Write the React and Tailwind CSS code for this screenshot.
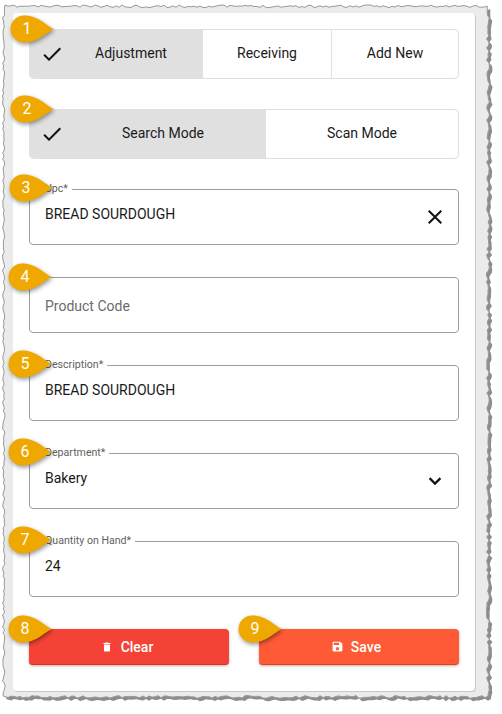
import React from 'react';

const font = { fontFamily: 'Roboto, sans-serif' };

// torn paper edge, seeded so every render gives the same outline
const tornEdge = () => {
  let seed = 11;
  const rnd = () => {
    seed = (seed * 16807) % 2147483647;
    return seed / 2147483647;
  };
  const pts = [];
  for (let x = 5; x < 488; x += 3) pts.push([x, 5 + rnd() * 2.6]);
  for (let y = 6; y < 696; y += 3) pts.push([486.5 + rnd() * 3, y]);
  for (let x = 488; x > 5; x -= 3) pts.push([x, 695.5 + rnd() * 2.8]);
  for (let y = 696; y > 6; y -= 3) pts.push([2.5 + rnd() * 2.5, y]);
  return pts.map((p) => p[0].toFixed(1) + ',' + p[1].toFixed(1)).join(' ');
};

const edge = tornEdge();

const markers = [
  { n: 1, x: 9, y: 29 },
  { n: 2, x: 9, y: 109 },
  { n: 3, x: 8, y: 188 },
  { n: 4, x: 7, y: 277 },
  { n: 5, x: 7, y: 364 },
  { n: 6, x: 7, y: 452 },
  { n: 7, x: 7, y: 540 },
  { n: 8, x: 7, y: 629 },
  { n: 9, x: 237, y: 629 },
];

const Marker = ({ n, x, y }) => (
  <div className="absolute w-[46px] h-[28px]" style={{ left: x, top: y - 14 }}>
    <svg width="46" height="28" viewBox="0 0 46 28" className="absolute inset-0 overflow-visible drop-shadow-[1px_2px_2px_rgba(0,0,0,0.4)]">
      <path d="M45 14 C38 16.5 30 27.5 15 27.5 A13.5 13.5 0 0 1 15 .5 C30 .5 38 11.5 45 14 Z" fill="#efa800" />
    </svg>
    <span className="absolute left-[11px] top-0 w-[14px] text-center text-white text-[16px] leading-[28px]">{n}</span>
  </div>
);

const CheckIcon = () => (
  <svg width="24" height="24" viewBox="0 0 24 24" fill="#111">
    <path d="M9 16.17 4.83 12l-1.42 1.41L9 19 21 7l-1.41-1.41z" />
  </svg>
);

const ToggleGroup = ({ options }) => (
  <div className="flex h-[50px] rounded border border-[#e0e0e0]">
    {options.map((o) => (
      <div
        key={o.label}
        style={{ width: o.w }}
        className={
          'relative flex items-center justify-center pb-[2px] text-sm text-[#1a1a1a] ' +
          (o.selected ? 'bg-[#e0e0e0] rounded-l pl-[30px] ' : '') +
          (o.divider ? 'border-l border-[#e0e0e0] ' : '')
        }
      >
        {o.selected && (
          <span className="absolute left-[10px] top-[12px]">
            <CheckIcon />
          </span>
        )}
        {o.label}
      </div>
    ))}
  </div>
);

const Field = ({ label, value, placeholder, icon }) => (
  <div className="relative h-[56px] rounded border border-[#9e9e9e] px-[15px]">
    {label ? (
      <span className="absolute left-[11px] top-[-7px] bg-white px-1 text-[10.6px] leading-3 text-[#5f5f5f]">{label}</span>
    ) : null}
    {placeholder ? (
      <div className="pt-[18px] text-sm leading-5 text-[#6b6b6b]">{placeholder}</div>
    ) : (
      <div className="pt-[14px] text-sm leading-5 text-[#1a1a1a]">{value}</div>
    )}
    {icon && <span className="absolute right-[11px] top-[15px]">{icon}</span>}
  </div>
);

export default function App() {
  return (
    <div className="relative w-[502px] h-[714px] overflow-hidden bg-white pl-[13px] pt-[13px]" style={font}>
      <svg width="502" height="714" className="absolute inset-0">
        <polygon points={edge} fill="#6f6f6f" transform="translate(3 3)" opacity="0.8" />
        <polygon points={edge} fill="#eaecec" stroke="#9a9a9a" strokeWidth="1" />
      </svg>

      <div className="relative flex h-[678px] w-[462px] flex-col rounded bg-white p-4 shadow-[1px_1px_0_#c8c8c8]">
        <ToggleGroup
          options={[
            { label: 'Adjustment', w: 172, selected: true },
            { label: 'Receiving', w: 129, divider: true },
            { label: 'Add New', w: 127, divider: true },
          ]}
        />
        <div className="mt-[30px]">
          <ToggleGroup
            options={[
              { label: 'Search Mode', w: 236, selected: true },
              { label: 'Scan Mode', w: 192 },
            ]}
          />
        </div>

        <div className="mt-[30px] flex flex-col gap-8">
          <Field
            label="Upc*"
            value="BREAD SOURDOUGH"
            icon={
              <svg width="24" height="24" viewBox="0 0 24 24" fill="#111">
                <path d="M19 6.41 17.59 5 12 10.59 6.41 5 5 6.41 10.59 12 5 17.59 6.41 19 12 13.41 17.59 19 19 17.59 13.41 12z" />
              </svg>
            }
          />
          <Field placeholder="Product Code" />
          <Field label="Description*" value="BREAD SOURDOUGH" />
          <Field
            label="Department*"
            value="Bakery"
            icon={
              <svg width="24" height="24" viewBox="0 0 24 24" fill="#111" stroke="#111" strokeWidth="0.4">
                <path d="M16.59 8.59 12 13.17 7.41 8.59 6 10l6 6 6-6z" />
              </svg>
            }
          />
          <Field label="Quantity on Hand*" value="24" />
        </div>

        <div className="mt-8 flex justify-between">
          <button className="flex h-9 w-[200px] items-center justify-center gap-2 rounded border-b border-[#e8291c] bg-[#f44336] pr-1 text-sm font-medium text-white shadow-[0_1px_3px_rgba(0,0,0,0.3)]">
            <svg width="12" height="12" viewBox="0 0 24 24" fill="white">
              <path d="M6 19c0 1.1.9 2 2 2h8c1.1 0 2-.9 2-2V7H6v12zM19 4h-3.5l-1-1h-5l-1 1H5v2h14V4z" />
            </svg>
            Clear
          </button>
          <button className="flex h-9 w-[200px] items-center justify-center gap-[7px] rounded border-b border-[#f03c0c] bg-[#ff5a36] pr-[6px] text-sm font-medium text-white shadow-[0_1px_3px_rgba(0,0,0,0.3)]">
            <svg width="13" height="13" viewBox="0 0 24 24" fill="white">
              <path d="M17 3H5c-1.11 0-2 .9-2 2v14c0 1.1.89 2 2 2h14c1.1 0 2-.9 2-2V7l-4-4zm-5 16c-1.66 0-3-1.34-3-3s1.34-3 3-3 3 1.34 3 3-1.34 3-3 3zm3-10H5V5h10v4z" />
            </svg>
            Save
          </button>
        </div>
      </div>

      {markers.map((m) => (
        <Marker key={m.n} {...m} />
      ))}
    </div>
  );
}
